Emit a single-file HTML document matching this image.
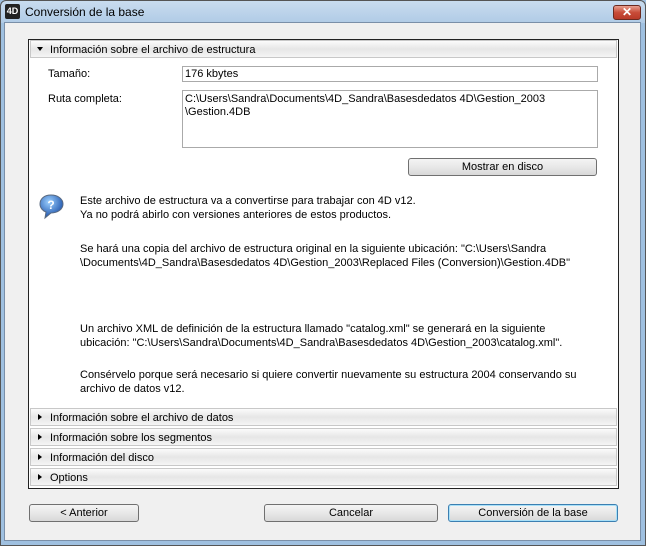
<!DOCTYPE html>
<html><head><meta charset="utf-8"><style>
*{margin:0;padding:0;box-sizing:border-box}
body{width:646px;height:546px;overflow:hidden;background:#9fc0e0;font-family:"Liberation Sans",sans-serif;font-size:11px;color:#000;position:relative}
.abs{position:absolute}
#win{left:0;top:0;width:646px;height:546px;border:1px solid #555;border-radius:6px 6px 0 0;background:linear-gradient(#c9dcef,#b0cbe6 22px,#9fc0e0 22px)}
#client{left:4px;top:22px;width:637px;height:519px;background:#f0f0f0;border:1px solid #7a8fa8}
.t{position:absolute;white-space:nowrap}
#panel{left:28px;top:39px;width:591px;height:450px;background:#fff;border:1px solid #222}
.hdr{position:absolute;left:1px;width:587px;height:18px;border:1px solid #c8c8c8;background:linear-gradient(#fbfbfb,#e6e6e6 50%,#f5f5f5)}
.hdr span{position:absolute;left:19px;top:3px}
.tri{position:absolute;left:7px;top:5px;width:0;height:0;border-top:3.5px solid transparent;border-bottom:3.5px solid transparent;border-left:4px solid #000}
.down{left:6px;top:6px;border-left:3.5px solid transparent;border-right:3.5px solid transparent;border-top:4px solid #000;border-bottom:0}
.inp{position:absolute;border:1px solid #aaa;background:#fff;padding:2px 2px}
.btn{position:absolute;height:18px;border:1px solid #707070;border-radius:3px;background:linear-gradient(#f4f4f4,#e8e8e8 50%,#d8d8d8);text-align:center;line-height:17px}
</style></head><body>
<div id="win" class="abs"></div>
<div class="abs" style="left:5px;top:4px;width:15px;height:15px;background:#222;border-radius:2px;color:#fff;font-size:9px;font-weight:bold;text-align:center;line-height:15px">4D</div>
<div class="t" style="left:25px;top:5px;font-size:12px">Conversión de la base</div>
<div class="abs" style="left:613px;top:5px;width:28px;height:15px;border:1px solid #6b2a20;border-radius:3px;background:linear-gradient(#e8a090,#c84c38 50%,#b83a28);color:#fff;font-weight:bold;text-align:center;line-height:13px;font-size:12px">✕</div>
<div id="client" class="abs"></div>
<div id="panel" class="abs">
 <div class="hdr" style="top:0"><i class="tri down"></i><span>Información sobre el archivo de estructura</span></div>
 <div class="t" style="left:19px;top:28px">Tamaño:</div>
 <div class="inp" style="left:153px;top:26px;width:416px;height:16px;padding-top:1px">176 kbytes</div>
 <div class="t" style="left:19px;top:53px">Ruta completa:</div>
 <div class="inp" style="left:153px;top:50px;width:416px;height:58px;line-height:13px">C:\Users\Sandra\Documents\4D_Sandra\Basesdedatos 4D\Gestion_2003<br>\Gestion.4DB</div>
 <div class="btn" style="left:379px;top:118px;width:189px">Mostrar en disco</div>
 <svg class="abs" style="left:9px;top:153px" width="28" height="28" viewBox="0 0 28 28"><defs><radialGradient id="g" cx="40%" cy="30%" r="70%"><stop offset="0" stop-color="#9cd0ff"/><stop offset="1" stop-color="#1a4fa8"/></radialGradient></defs><path d="M13 2C6 2 2 6 2 11c0 4 3 7 6 8l-1 6 6-5c7 0 12-4 12-9S20 2 13 2z" fill="url(#g)" stroke="#5a6a80"/><text x="13" y="16" font-size="12" font-weight="bold" fill="#fff" text-anchor="middle" font-family="Liberation Sans">?</text></svg>
 <div class="t" style="left:51px;top:154px;line-height:14px">Este archivo de estructura va a convertirse para trabajar con 4D v12.<br>Ya no podrá abirlo con versiones anteriores de estos productos.</div>
 <div class="t" style="left:51px;top:202px;line-height:14px">Se hará una copia del archivo de estructura original en la siguiente ubicación: "C:\Users\Sandra<br>\Documents\4D_Sandra\Basesdedatos 4D\Gestion_2003\Replaced Files (Conversion)\Gestion.4DB"</div>
 <div class="t" style="left:51px;top:282px;line-height:14px">Un archivo XML de definición de la estructura llamado "catalog.xml" se generará en la siguiente<br>ubicación: "C:\Users\Sandra\Documents\4D_Sandra\Basesdedatos 4D\Gestion_2003\catalog.xml".</div>
 <div class="t" style="left:51px;top:328px;line-height:14px">Consérvelo porque será necesario si quiere convertir nuevamente su estructura 2004 conservando su<br>archivo de datos v12.</div>
 <div class="hdr" style="top:368px"><i class="tri"></i><span>Información sobre el archivo de datos</span></div>
 <div class="hdr" style="top:388px"><i class="tri"></i><span>Información sobre los segmentos</span></div>
 <div class="hdr" style="top:408px"><i class="tri"></i><span>Información del disco</span></div>
 <div class="hdr" style="top:428px"><i class="tri"></i><span>Options</span></div>
</div>
<div class="btn" style="left:29px;top:504px;width:110px">&lt; Anterior</div>
<div class="btn" style="left:264px;top:504px;width:174px">Cancelar</div>
<div class="btn" style="left:448px;top:504px;width:170px;border-color:#3c7fb1;box-shadow:inset 0 0 0 1px #a8e0f8">Conversión de la base</div>
</body></html>
